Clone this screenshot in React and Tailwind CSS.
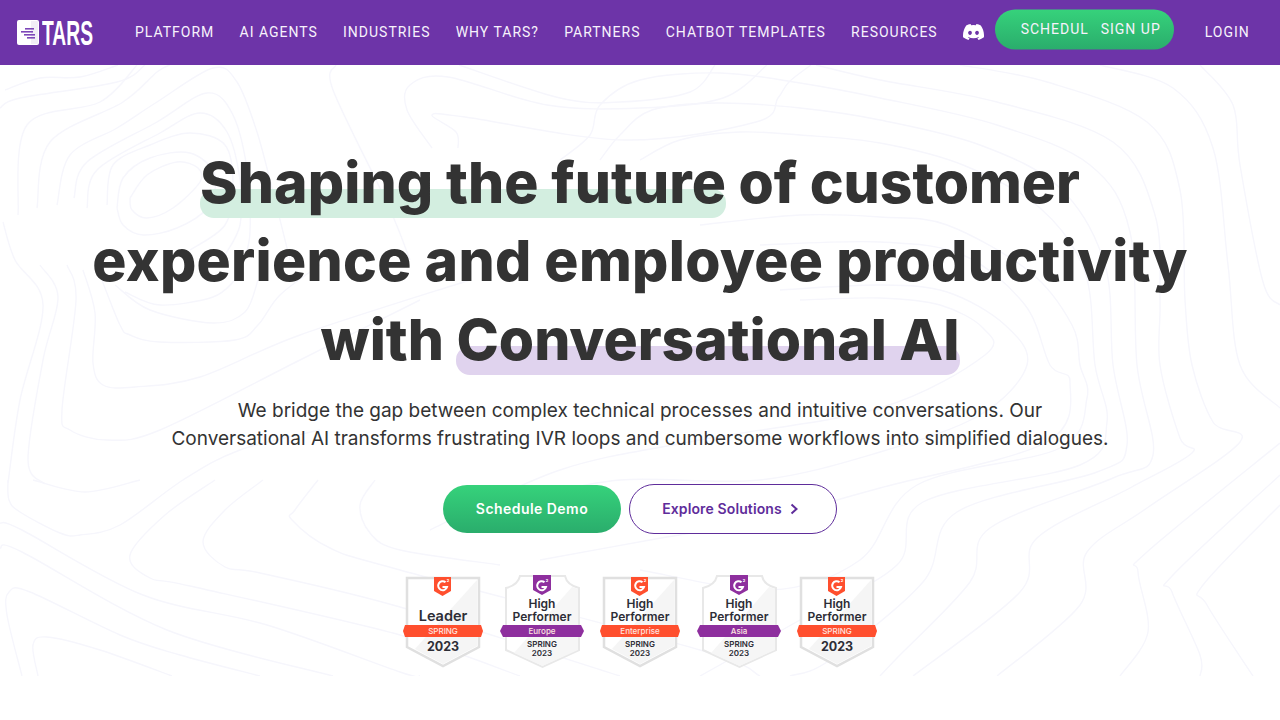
const nav = ["PLATFORM", "AI AGENTS", "INDUSTRIES", "WHY TARS?", "PARTNERS", "CHATBOT TEMPLATES", "RESOURCES"];

const contours = [
  [[130,198],[147,175],[177,162],[198,168],[200,182],[173,208],[147,218],[132,210],[130,198]],
  [[117,208],[123,178],[150,158],[190,153],[215,175],[207,208],[177,228],[143,235],[123,225],[117,208]],
  [[107,205],[113,165],[150,145],[190,133],[225,145],[233,185],[225,225],[190,250]],
  [[87,208],[97,170],[160,133],[200,113],[227,132],[240,180],[240,225],[225,255]],
  [[74,198],[87,162],[157,122],[207,93],[233,115],[248,175],[250,232],[245,258]],
  [[57,205],[70,155],[117,128],[157,102],[213,68],[237,82],[257,132],[275,200],[290,260]],
  [[37,208],[50,142],[123,102],[157,72],[170,65]],
  [[18,215],[27,125],[100,102],[137,65]],
  [[0,108],[20,98],[117,82],[145,65]],
  [[5,90],[40,78],[80,77],[118,65]],
  [[3,222],[15,260],[43,305],[20,400],[8,483]],
  [[40,265],[58,297],[43,360],[28,460],[45,484]],
  [[67,265],[76,300],[62,410],[70,430],[107,440],[160,430],[300,360],[420,300]],
  [[83,270],[95,313],[93,363],[103,385],[135,387],[200,377],[300,335],[470,280]],
  [[100,275],[120,325],[130,335],[160,342],[235,340],[258,325],[280,295],[320,265]],
  [[115,285],[150,310],[213,323],[245,312],[258,280]],
  [[125,292],[160,305],[213,297],[235,280]],
  [[8,480],[9,500],[20,512],[60,533],[80,535],[120,525],[183,480],[240,450],[320,430]],
  [[33,480],[85,492],[140,480]],
  [[0,523],[22,530],[143,595],[267,625],[400,672],[420,676]],
  [[0,548],[22,552],[167,630],[333,676]],
  [[22,676],[7,615],[9,592],[30,592],[120,635],[180,655],[260,676]],
  [[38,676],[33,645],[47,637],[100,650],[172,676]],
  [[215,480],[165,515],[130,555],[150,578],[190,586],[400,635],[520,676]],
  [[263,480],[225,510],[203,542],[225,567],[260,573],[400,607],[620,676]],
  [[318,480],[295,510],[292,520],[330,548],[400,570],[700,650],[760,676]],
  [[375,480],[360,505],[370,533],[400,550],[500,565]],
  [[336,65],[333,90],[388,205],[410,260]],
  [[459,65],[560,98],[620,102],[690,92],[715,65]],
  [[767,65],[723,98],[640,108],[547,105],[448,77],[410,85],[407,110],[432,148]],
  [[811,65],[789,82],[778,98],[756,122],[624,140],[465,117],[432,115],[456,132],[458,148]],
  [[1200,65],[1233,105],[1240,165],[1263,282],[1280,305]],
  [[1100,65],[1173,88],[1213,148],[1228,265],[1240,365],[1280,408]],
  [[960,65],[1047,82],[1147,122],[1180,190],[1185,300],[1192,365],[1213,422],[1240,442],[1147,508],[1087,552],[1080,605],[997,676]],
  [[816,65],[880,80],[997,102],[1113,142],[1155,215],[1160,300],[1160,365],[1180,438],[1192,453],[1130,488],[1037,538],[1020,592],[913,676]],
  [[560,160],[590,135],[600,105],[640,80],[720,73],[800,83],[880,98],[997,125],[1090,165],[1130,232],[1137,365],[1153,455],[1113,478],[990,528],[970,582],[897,658],[880,676]],
  [[600,160],[620,135],[652,110],[717,103],[800,108],[880,120],[980,145],[1060,188],[1105,265],[1113,365],[1127,445],[1097,472],[957,512],[923,582],[830,660],[790,676]],
  [[640,160],[680,140],[740,132],[800,135],[880,143],[963,165],[1040,208],[1085,272],[1095,365],[1107,422],[1080,465],[923,502],[897,565],[800,620],[700,676]],
  [[700,225],[800,215],[880,217],[947,225],[1030,272],[1072,325],[1080,365],[1087,398],[1060,448],[917,485],[860,560],[770,590],[640,570]],
  [[760,245],[880,242],[963,255],[1025,305],[1050,365],[1070,382],[1047,442],[880,488],[760,520],[650,540],[540,560]],
  [[780,290],[880,285],[947,292],[1005,325],[1027,365],[980,415],[880,452],[760,480],[620,480],[520,500]],
  [[800,300],[880,298],[940,305],[983,328],[985,355],[880,408],[700,440],[560,470],[430,530]],
  [[1280,443],[1147,552],[1138,572],[1148,632],[1120,676]],
  [[1280,475],[1173,575],[1172,592],[1200,655],[1200,676]],
  [[1280,505],[1203,585],[1207,605],[1253,676]],
];

function spline(p) {
  let d = `M${p[0][0]} ${p[0][1]}`;
  for (let i = 0; i < p.length - 1; i++) {
    const a = p[Math.max(i - 1, 0)], b = p[i], c = p[i + 1], e = p[Math.min(i + 2, p.length - 1)];
    const c1 = [b[0] + (c[0] - a[0]) / 6, b[1] + (c[1] - a[1]) / 6];
    const c2 = [c[0] - (e[0] - b[0]) / 6, c[1] - (e[1] - b[1]) / 6];
    d += `C${c1[0]} ${c1[1]} ${c2[0]} ${c2[1]} ${c[0]} ${c[1]}`;
  }
  return d;
}

function Badge({ lines, band, sub, purple }) {
  const accent = purple ? "#8e2f9e" : "#ff4f2e";
  const font = "Inter, sans-serif";
  return (
    <svg width="84" height="94" viewBox="0 0 84 94" className="shrink-0">
      {purple ? (
        <>
          <path d="M20 1H65Q67 10 79 13V75L42.5 92L6 75V13Q18 10 20 1Z" fill="#fff" stroke="#e8e8e8" strokeWidth="2" />
          <path d="M72 12L78 14V75L42.5 91L14 78Z" fill="#f6f6f6" />
        </>
      ) : (
        <>
          <path d="M6 3H78V72L42 91L6 72Z" fill="#fff" stroke="#e0e0e0" strokeWidth="2.5" />
          <path d="M76 5V71L42 89L14 74Z" fill="#f5f5f5" />
        </>
      )}
      <path d={purple ? "M33 0H51V15L42 20L33 15Z" : "M33 2H50V16L41.5 21L33 16Z"} fill={accent} />
      <path d="M44.5 7.2A4.5 4.5 0 1 0 46 12H41.5" fill="none" stroke="#fff" strokeWidth="2" />
      <text x="47" y="6.5" textAnchor="middle" fill="#fff" fontFamily={font} fontWeight="700" fontSize="4">2</text>
      <path d={purple ? "M0 56L3 50H81L84 56L81 62H3Z" : "M2 56L4 50H80L82 56L80 62H4Z"} fill={accent} />
      {lines.map((l, i) => (
        <text key={l} x="42" y={lines.length === 1 ? 46 : 33 + i * 13} textAnchor="middle" fill="#2d2d36" fontFamily={font} fontWeight="600" fontSize={lines.length === 1 ? 14.5 : 12}>{l}</text>
      ))}
      <text x="42" y="59" textAnchor="middle" fill="#ffe6e0" fontFamily={font} fontWeight="500" fontSize="8">{band}</text>
      {sub ? (
        <>
          <text x="42" y="72" textAnchor="middle" fill="#2d2d36" fontFamily={font} fontWeight="600" fontSize="8">SPRING</text>
          <text x="42" y="81" textAnchor="middle" fill="#2d2d36" fontFamily={font} fontWeight="600" fontSize="8">2023</text>
        </>
      ) : (
        <text x="42" y="76" textAnchor="middle" fill="#2d2d36" fontFamily={font} fontWeight="700" fontSize="12.5">2023</text>
      )}
    </svg>
  );
}

function Hl({ children, color }) {
  return (
    <span className="relative inline-block">
      <span className={`absolute left-0 right-0 top-[45px] h-[29px] rounded-[14px] ${color}`} />
      <span className="relative">{children}</span>
    </span>
  );
}

export default function App() {
  return (
    <div className="min-h-[720px] bg-white font-['Inter',sans-serif]">
      <header className="flex h-[65px] items-center bg-[#6d34a8] pl-[17px] font-['Roboto',sans-serif] text-[14px] tracking-[1px] text-[#f7f2fc]">
        <div className="flex w-[118px] shrink-0 items-center">
          <svg width="22" height="25" viewBox="0 0 22 25">
            <rect width="22" height="25" rx="2" fill="#fff" />
            <path d="M14 1H20Q21 1 21 2V23Q21 24 20 24H14Z" fill="#f1eef6" />
            <rect x="8" y="8" width="9" height="1.6" fill="#7d47b8" />
            <rect x="4" y="11" width="12" height="1.6" fill="#7d47b8" />
            <rect x="7" y="14" width="11" height="1.6" fill="#7d47b8" />
            <rect x="10" y="17" width="8" height="1.6" fill="#7d47b8" />
          </svg>
          <span className="ml-[3px] origin-left font-['Liberation_Sans',sans-serif] text-[35px] font-bold leading-none tracking-[0px] text-white [transform:scaleX(0.55)]">TARS</span>
        </div>
        <nav className="flex gap-[25.2px]">
          {nav.map((n) => <span key={n}>{n}</span>)}
        </nav>
        <svg className="ml-[25px] -translate-y-[1px]" width="21" height="16" viewBox="0 0 127 96" fill="#fff">
          <path d="M107.7 8.1A105 105 0 0 0 81.5 0a72 72 0 0 0-3.4 6.8 97.7 97.7 0 0 0-29.1 0A72 72 0 0 0 45.6 0a105.9 105.9 0 0 0-26.2 8.1C2.8 32.7-1.7 56.6.5 80.2a105.7 105.7 0 0 0 32.2 16.2 77.7 77.7 0 0 0 6.9-11.2 68.4 68.4 0 0 1-10.9-5.2c.9-.7 1.8-1.3 2.6-2a75.6 75.6 0 0 0 64.4 0c.9.7 1.7 1.4 2.6 2a68.7 68.7 0 0 1-10.9 5.2 77 77 0 0 0 6.9 11.1 105.3 105.3 0 0 0 32.2-16.1c2.6-27.3-4.5-51-18.8-72.1ZM42.4 65.7c-6.3 0-11.4-5.7-11.4-12.7s5-12.8 11.4-12.8S53.9 46 53.8 53s-5 12.7-11.4 12.7Zm42.3 0c-6.2 0-11.4-5.7-11.4-12.7s5-12.8 11.4-12.8S96.2 46 96.1 53s-5 12.7-11.4 12.7Z" />
        </svg>
        <div className="ml-[11px] flex h-[40px] w-[179px] -translate-y-[3.5px] items-center rounded-[20px] bg-gradient-to-b from-[#36d27b] to-[#2aad6c] pl-[26px]">
          <span className="w-[68px] whitespace-nowrap">SCHEDUL</span>
          <span className="ml-[12px] whitespace-nowrap">SIGN UP</span>
        </div>
        <span className="ml-[31px]">LOGIN</span>
      </header>
      <section className="relative flex h-[611px] flex-col items-center overflow-hidden">
        <svg className="absolute left-0 top-0" width="1280" height="611" viewBox="0 65 1280 611" fill="none" stroke="#f6f6fc" strokeWidth="1.4">
          {contours.map((p, i) => <path key={i} d={spline(p)} />)}
        </svg>
        <h1 className="relative mt-[79px] w-full text-center text-[57px] font-extrabold leading-[78.4px] text-[#333333]">
          <div><span className="tracking-[0.12px]"><Hl color="bg-[#d3eee0]">Shaping the future</Hl></span> of customer</div>
          <div className="tracking-[0.3px]">experience and employee productivity</div>
          <div>with <Hl color="bg-[#e0d3ee]">Conversational AI</Hl></div>
        </h1>
        <p className="relative mt-[18px] text-center text-[19px] leading-[28px] text-[#333333]">
          We bridge the gap between complex technical processes and intuitive conversations. Our<br />
          Conversational AI transforms frustrating IVR loops and cumbersome workflows into simplified dialogues.
        </p>
        <div className="relative mt-[31px] flex items-center gap-[8px] text-[14px] font-semibold">
          <div className="flex h-[48px] w-[178px] items-center justify-center rounded-[24px] bg-gradient-to-b from-[#36d27b] to-[#2aad6c] pb-[2px] tracking-[0.45px] text-white">Schedule Demo</div>
          <div className="flex h-[50px] w-[208px] items-center justify-center gap-[8px] rounded-[25px] border border-[#5f2d9b] bg-white pb-[2px] pr-[6px] tracking-[0.12px] text-[#5f2d9b]">
            Explore Solutions
            <svg className="translate-y-[1px]" width="8" height="12" viewBox="0 0 8 12" fill="none" stroke="#5f2d9b" strokeWidth="2"><path d="M1.5 1.5L6.5 6L1.5 10.5" /></svg>
          </div>
        </div>
        <div className="relative mt-[41px] flex items-center justify-center gap-[14.5px]">
          <Badge lines={["Leader"]} band="SPRING" />
          <Badge purple sub lines={["High", "Performer"]} band="Europe" />
          <Badge sub lines={["High", "Performer"]} band="Enterprise" />
          <Badge purple sub lines={["High", "Performer"]} band="Asia" />
          <Badge lines={["High", "Performer"]} band="SPRING" />
        </div>
      </section>
    </div>
  );
}
